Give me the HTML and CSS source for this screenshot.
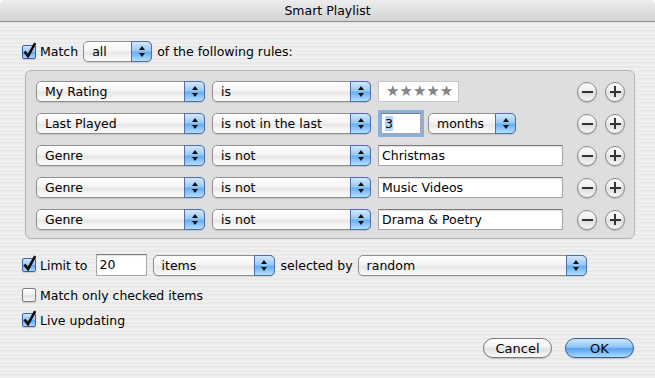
FILE: index.html
```html
<!DOCTYPE html>
<html lang="en">
<head>
    <meta charset="UTF-8">
    <title>Smart Playlist</title>
    <link rel="stylesheet" href="styles.css">
</head>
<body>

<div class="window">
    <div class="titlebar">Smart Playlist</div>
    <div class="content">
        <div class="line">
            <span class="check on"><svg viewBox="0 0 16 18"><path d="M3.5 10.5 L7 15.2 L14.2 2.2"/></svg></span>
            <span>Match</span>
            <div class="popup match-popup"><span class="value">all</span><span class="arrows"><i class="up"></i><i class="down"></i></span></div>
            <span class="after">of the following rules:</span>
        </div>

        <div class="rules">
            <div class="rule">
                <div class="popup key"><span class="value">My Rating</span><span class="arrows"><i class="up"></i><i class="down"></i></span></div>
                <div class="popup op"><span class="value">is</span><span class="arrows"><i class="up"></i><i class="down"></i></span></div>
                <div class="field stars">★★★★★</div>
                <div class="pm"><span class="round minus"></span><span class="round plus"></span></div>
            </div>
            <div class="rule">
                <div class="popup key"><span class="value">Last Played</span><span class="arrows"><i class="up"></i><i class="down"></i></span></div>
                <div class="popup op"><span class="value">is not in the last</span><span class="arrows"><i class="up"></i><i class="down"></i></span></div>
                <div class="field focus"><span class="sel">3</span></div>
                <div class="popup months"><span class="value">months</span><span class="arrows"><i class="up"></i><i class="down"></i></span></div>
                <div class="pm"><span class="round minus"></span><span class="round plus"></span></div>
            </div>
            <div class="rule">
                <div class="popup key"><span class="value">Genre</span><span class="arrows"><i class="up"></i><i class="down"></i></span></div>
                <div class="popup op"><span class="value">is not</span><span class="arrows"><i class="up"></i><i class="down"></i></span></div>
                <div class="field">Christmas</div>
                <div class="pm"><span class="round minus"></span><span class="round plus"></span></div>
            </div>
            <div class="rule">
                <div class="popup key"><span class="value">Genre</span><span class="arrows"><i class="up"></i><i class="down"></i></span></div>
                <div class="popup op"><span class="value">is not</span><span class="arrows"><i class="up"></i><i class="down"></i></span></div>
                <div class="field">Music Videos</div>
                <div class="pm"><span class="round minus"></span><span class="round plus"></span></div>
            </div>
            <div class="rule">
                <div class="popup key"><span class="value">Genre</span><span class="arrows"><i class="up"></i><i class="down"></i></span></div>
                <div class="popup op"><span class="value">is not</span><span class="arrows"><i class="up"></i><i class="down"></i></span></div>
                <div class="field">Drama &amp; Poetry</div>
                <div class="pm"><span class="round minus"></span><span class="round plus"></span></div>
            </div>
        </div>

        <div class="line limit-line">
            <span class="check on"><svg viewBox="0 0 16 18"><path d="M3.5 10.5 L7 15.2 L14.2 2.2"/></svg></span>
            <span>Limit to</span>
            <div class="field num">20</div>
            <div class="popup items"><span class="value">items</span><span class="arrows"><i class="up"></i><i class="down"></i></span></div>
            <span class="selected">selected by</span>
            <div class="popup random"><span class="value">random</span><span class="arrows"><i class="up"></i><i class="down"></i></span></div>
        </div>

        <div class="line option">
            <span class="check"></span>
            <span>Match only checked items</span>
        </div>
        <div class="line option live">
            <span class="check on"><svg viewBox="0 0 16 18"><path d="M3.5 10.5 L7 15.2 L14.2 2.2"/></svg></span>
            <span>Live updating</span>
        </div>

        <div class="actions">
            <button class="push">Cancel</button>
            <button class="push default">OK</button>
        </div>
    </div>
</div>

</body>
</html>
```

FILE: styles.css
```css
body {
    margin: 0;
    background: #ffffff;
    font-family: "DejaVu Sans", sans-serif;
    font-size: 12.5px;
    color: #000000;
}
.window {
    width: 655px;
    height: 378px;
    border-radius: 5px 5px 0 0;
    overflow: hidden;
    background: repeating-linear-gradient(#efefef 0 2px, #e9e9e9 2px 4px);
}
.titlebar {
    height: 22px;
    box-sizing: border-box;
    border-bottom: 1px solid #8a8a8a;
    background: linear-gradient(#ededed, #d3d3d3);
    text-align: center;
    line-height: 21px;
}
.content {
    padding: 19px 20px 0 22px;
}
.line {
    display: flex;
    align-items: center;
    height: 21px;
    white-space: nowrap;
}

/* checkboxes */
.check {
    box-sizing: border-box;
    flex: none;
    position: relative;
    width: 14px;
    height: 14px;
    margin-right: 4px;
    border: 1px solid #7c7c7c;
    border-radius: 2px;
    background: linear-gradient(#ffffff, #efefef 50%, #e0e0e0 50%, #f7f7f7);
    box-shadow: 0 1px 1px rgba(0, 0, 0, 0.15);
}
.check.on {
    border-color: #3d5f9c;
    background: linear-gradient(#d2e7fc, #93c4f5 50%, #5da3ef 50%, #a9daff);
}
.check svg {
    position: absolute;
    left: -2px;
    top: -5px;
    width: 16px;
    height: 18px;
    overflow: visible;
}
.check path {
    fill: none;
    stroke: #0c0c0c;
    stroke-width: 2.6;
}

/* popup menus */
.popup {
    box-sizing: border-box;
    flex: none;
    display: flex;
    height: 21px;
    border: 1px solid #8e8e8e;
    border-radius: 5px;
    background: linear-gradient(#ffffff, #f4f4f4 45%, #e8e8e8 55%, #fbfbfb);
    box-shadow: 0 1px 1px rgba(0, 0, 0, 0.12);
}
.popup .value {
    flex: 1;
    padding-left: 8px;
    line-height: 19px;
    overflow: hidden;
}
.popup .arrows {
    width: 19px;
    margin: -1px -1px -1px 0;
    border: 1px solid #4d6ea8;
    border-radius: 0 5px 5px 0;
    background: linear-gradient(#d3e8fc, #9ccaf6 45%, #68adf2 55%, #b4e0ff);
    display: flex;
    flex-direction: column;
    align-items: center;
    justify-content: center;
    gap: 3px;
}
.arrows i {
    width: 0;
    height: 0;
    border-left: 3px solid transparent;
    border-right: 3px solid transparent;
}
.arrows .up {
    border-bottom: 4px solid #111111;
}
.arrows .down {
    border-top: 4px solid #111111;
}
.match-popup {
    width: 69px;
    margin-left: 5px;
}
.after {
    margin-left: 5px;
}

/* rules box */
.rules {
    box-sizing: border-box;
    width: 610px;
    margin: 8px 0 0 3px;
    padding: 10px 9px 8px 10px;
    border: 1px solid #b3b3b3;
    border-radius: 6px;
    background: #dedede;
    display: flex;
    flex-direction: column;
    gap: 11px;
}
.rule {
    display: flex;
    align-items: center;
    height: 21px;
    gap: 7px;
}
.key {
    width: 169px;
}
.op {
    width: 159px;
}
.field {
    box-sizing: border-box;
    flex: none;
    width: 185px;
    height: 21px;
    padding-left: 3px;
    line-height: 19px;
    background: #ffffff;
    border: 1px solid #a6a6a6;
    border-top-color: #7a7a7a;
    box-shadow: inset 0 1px 1px rgba(0, 0, 0, 0.12);
    white-space: nowrap;
}
.stars {
    width: 81px;
    padding-left: 7px;
    border-color: #c6c6c6;
    box-shadow: none;
    color: #858585;
    font-size: 15px;
    letter-spacing: 0;
}
.focus {
    width: 40px;
    margin-left: 3px;
    box-shadow: 0 0 0 3px #8aafdc;
}
.sel {
    background: #b5d5fe;
}
.months {
    width: 88px;
}
.pm {
    margin-left: auto;
    display: flex;
    gap: 8px;
}
.round {
    box-sizing: border-box;
    position: relative;
    width: 20px;
    height: 20px;
    border: 1px solid #8a8a8a;
    border-radius: 50%;
    background: linear-gradient(#fdfdfd, #ececec 50%, #dcdcdc 50%, #f6f6f6);
    box-shadow: 0 1px 1px rgba(0, 0, 0, 0.2);
}
.round::before,
.plus::after {
    content: "";
    position: absolute;
    background: #333333;
}
.round::before {
    left: 3.5px;
    top: 8px;
    width: 11px;
    height: 2.2px;
}
.plus::after {
    left: 8px;
    top: 3.5px;
    width: 2.2px;
    height: 11px;
}

/* limit and options */
.limit-line {
    margin-top: 15px;
    height: 22px;
}
.num {
    width: 51px;
    height: 22px;
    margin-left: 8px;
    line-height: 20px;
}
.items {
    width: 122px;
    margin-left: 6px;
}
.selected {
    margin-left: 6px;
}
.random {
    width: 229px;
    margin-left: 5px;
}
.option {
    margin-top: 9px;
    height: 20px;
}
.live {
    margin-top: 5px;
}

/* buttons */
.actions {
    display: flex;
    justify-content: flex-end;
    gap: 13px;
    margin-top: 8px;
    padding-right: 1px;
}
.push {
    width: 69px;
    height: 20px;
    padding: 0;
    border: 1px solid #7a7a7a;
    border-radius: 10px;
    background: linear-gradient(#ffffff, #f1f1f1 45%, #e0e0e0 55%, #fafafa);
    box-shadow: 0 1px 1px rgba(0, 0, 0, 0.18);
    font-family: inherit;
    font-size: 13px;
    color: #000000;
}
.push.default {
    border-color: #3a5a9a;
    background: linear-gradient(#cde5fc, #8fc4f6 45%, #58a2ef 55%, #aadcff);
}
```
